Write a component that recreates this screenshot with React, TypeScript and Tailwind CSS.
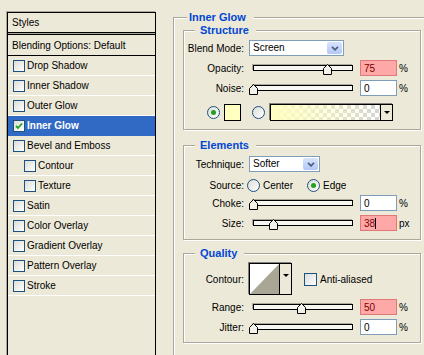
import React from 'react';

const styles = [
  { label: 'Drop Shadow' },
  { label: 'Inner Shadow' },
  { label: 'Outer Glow' },
  { label: 'Inner Glow', checked: true, active: true },
  { label: 'Bevel and Emboss' },
  { label: 'Contour', sub: true },
  { label: 'Texture', sub: true },
  { label: 'Satin' },
  { label: 'Color Overlay' },
  { label: 'Gradient Overlay' },
  { label: 'Pattern Overlay' },
  { label: 'Stroke' },
];

function Checkbox({ checked = false, size = 'w-[12px] h-[12px]' }: { checked?: boolean; size?: string }) {
  return (
    <div className={`${size} shrink-0 border border-[#1C5180] bg-linear-to-br from-[#DCDCD7] to-white flex items-center justify-center`}>
      {checked && (
        <svg width="8" height="8" viewBox="0 0 8 8">
          <path d="M1 4 L3 6 L7 1.5" stroke="#21A121" strokeWidth="1.8" fill="none" />
        </svg>
      )}
    </div>
  );
}

function Radio({ checked = false }: { checked?: boolean }) {
  return (
    <div className="w-[13px] h-[13px] shrink-0 rounded-full border border-[#1C5180] bg-linear-to-br from-[#DCDCD7] to-white flex items-center justify-center">
      {checked && <div className="w-[5px] h-[5px] rounded-full bg-[#21A121]" />}
    </div>
  );
}

function Select({ value, w }: { value: string; w: string }) {
  return (
    <div className={`${w} h-[16px] border border-[#7F9DB9] bg-white flex items-center justify-between`}>
      <span className="pl-[3px] leading-none">{value}</span>
      <div className="mr-[1px] w-[15px] h-[12px] rounded-[2px] bg-linear-to-b from-[#D8E4FD] to-[#B4C8F5] flex items-center justify-center">
        <svg width="8" height="5" viewBox="0 0 8 5">
          <path d="M1 0.8 L4 3.8 L7 0.8" stroke="#4D6185" strokeWidth="1.8" fill="none" />
        </svg>
      </div>
    </div>
  );
}

function Thumb() {
  return (
    <svg width="9" height="11" viewBox="0 0 9 11">
      <path d="M4.5 0.5 L8.5 4.5 L8.5 10.5 L0.5 10.5 L0.5 4.5 Z" fill="#F2F1EA" stroke="#000" />
    </svg>
  );
}

function Slider({ at }: { at: number }) {
  return (
    <div className="relative ml-[9px] w-[100px] h-[6px] border border-black bg-[#F7F6F1] shadow-[-1px_-1px_0_#ACA899]">
      <div className="absolute top-[-2px]" style={{ left: at - 5 }}>
        <Thumb />
      </div>
    </div>
  );
}

function NumInput({ value, pink = false, caret = false }: { value: string; pink?: boolean; caret?: boolean }) {
  return (
    <div
      className={`ml-[7px] w-[37px] h-[16px] flex items-center pl-[3px] border ${
        pink ? 'bg-[#FFA8A8] border-[#E07878] text-[#7A0000]' : 'bg-white border-[#7F9DB9]'
      }`}
    >
      {value}
      {caret && <div className="w-[1px] h-[11px] bg-black" />}
    </div>
  );
}

function SliderRow({ label, at, value, unit = '%', pink = false, caret = false, className = '' }: any) {
  return (
    <div className={`flex items-center h-[16px] ${className}`}>
      <span className="w-[60px] text-right">{label}</span>
      <Slider at={at} />
      <NumInput value={value} pink={pink} caret={caret} />
      <span className="ml-[2px]">{unit}</span>
    </div>
  );
}

function Group({ title, className = '', children }: { title: string; className?: string; children: React.ReactNode }) {
  return (
    <fieldset className={`border border-[#ACA899] shadow-[inset_1px_1px_0_#fff,1px_1px_0_#fff] ${className}`}>
      <legend className="ml-[11px] pl-[5px] pr-[7px] leading-[13px] text-[11px] font-bold text-[#0046D5] bg-[#ECE9D8]">
        {title}
      </legend>
      {children}
    </fieldset>
  );
}

export default function App() {
  return (
    <div className="w-[424px] h-[355px] overflow-hidden bg-[#ECE9D8] flex items-start font-['Liberation_Sans',Arial,sans-serif] text-[10px] text-black">
      {/* Styles list */}
      <div className="ml-[7px] mt-[12px] w-[149px] h-[360px] shrink-0 border border-black shadow-[-1px_-1px_0_#ACA899]">
        <div className="h-[19px] pl-[4px] flex items-center">Styles</div>
        <div className="h-[3px] border-y border-black bg-[#ACA899]" />
        <div className="h-[21px] pl-[4px] flex items-center border-b border-black">Blending Options: Default</div>
        {styles.map(s => (
          <div
            key={s.label}
            className={`h-[20px] flex items-center gap-[2px] border-b ${
              s.active ? 'bg-[#316AC5] border-[#316AC5] text-white font-bold' : 'border-white'
            } ${s.sub ? 'pl-[16px]' : 'pl-[5px]'}`}
          >
            <Checkbox checked={s.checked} />
            <span>{s.label}</span>
          </div>
        ))}
      </div>

      {/* Inner Glow settings */}
      <fieldset className="ml-[17px] mt-[11px] w-[260px] h-[400px] shrink-0 border border-[#ACA899] shadow-[inset_1px_1px_0_#fff,1px_1px_0_#fff]">
        <legend className="ml-[13px] pl-[2px] pr-[8px] leading-[13px] text-[11px] font-bold text-[#0046D5] bg-[#ECE9D8]">
          Inner Glow
        </legend>

        <Group title="Structure" className="ml-[9px] w-[238px] pb-[8px]">
          <div className="flex items-center h-[16px] mt-[3px]">
            <span className="w-[60px] text-right">Blend Mode:</span>
            <div className="ml-[5px]">
              <Select value="Screen" w="w-[95px]" />
            </div>
          </div>
          <SliderRow label="Opacity:" at={74} value="75" pink className="mt-[4px]" />
          <SliderRow label="Noise:" at={0} value="0" className="mt-[4px]" />
          <div className="flex items-center h-[17px] mt-[8px] pl-[23px]">
            <Radio checked />
            <div className="ml-[4px] w-[17px] h-[17px] border border-black bg-[#FFFFC0]" />
            <div className="ml-[11px]">
              <Radio />
            </div>
            <div className="ml-[5px] w-[123px] h-[17px] flex border border-black shadow-[-1px_-1px_0_#808080]">
              <div className="flex-1 bg-[repeating-conic-gradient(#D4D4D4_0_25%,#fff_0_50%)] bg-size-[8px_8px]">
                <div className="w-full h-full bg-linear-to-r from-[#FFFFC0] to-[#FFFFC0]/0" />
              </div>
              <div className="w-[12px] border-l border-black bg-[#ECE9D8] flex items-center justify-center">
                <svg width="6" height="4" viewBox="0 0 6 4">
                  <path d="M0 0 L6 0 L3 3 Z" fill="#000" />
                </svg>
              </div>
            </div>
          </div>
        </Group>

        <Group title="Elements" className="ml-[9px] mt-[9px] w-[238px] pb-[8px]">
          <div className="flex items-center h-[16px] mt-[4px]">
            <span className="w-[60px] text-right">Technique:</span>
            <div className="ml-[5px]">
              <Select value="Softer" w="w-[71px]" />
            </div>
          </div>
          <div className="flex items-center h-[16px] mt-[5px]">
            <span className="w-[60px] text-right">Source:</span>
            <div className="ml-[3px]">
              <Radio />
            </div>
            <span className="ml-[3px]">Center</span>
            <div className="ml-[14px]">
              <Radio checked />
            </div>
            <span className="ml-[3px]">Edge</span>
          </div>
          <SliderRow label="Choke:" at={0} value="0" className="mt-[2px]" />
          <SliderRow label="Size:" at={20} value="38" unit="px" pink caret className="mt-[4px]" />
        </Group>

        <Group title="Quality" className="ml-[9px] mt-[7px] w-[238px] pb-[7px]">
          <div className="flex items-center h-[32px] mt-[3px]">
            <span className="w-[60px] text-right">Contour:</span>
            <div className="ml-[5px] w-[43px] h-[32px] flex border border-black shadow-[-1px_-1px_0_#808080]">
              <svg width="29" height="30" viewBox="0 0 29 30" className="bg-white">
                <path d="M0 30 L29 0 L29 30 Z" fill="#AAA696" />
              </svg>
              <div className="flex-1 border-l border-black bg-[#ECE9D8] flex justify-center pt-[10px]">
                <svg width="6" height="4" viewBox="0 0 6 4">
                  <path d="M0 0 L6 0 L3 3 Z" fill="#000" />
                </svg>
              </div>
            </div>
            <div className="ml-[12px]">
              <Checkbox size="w-[13px] h-[13px]" />
            </div>
            <span className="ml-[3px]">Anti-aliased</span>
          </div>
          <SliderRow label="Range:" at={48} value="50" pink className="mt-[4px]" />
          <SliderRow label="Jitter:" at={0} value="0" className="mt-[4px]" />
        </Group>
      </fieldset>
    </div>
  );
}
